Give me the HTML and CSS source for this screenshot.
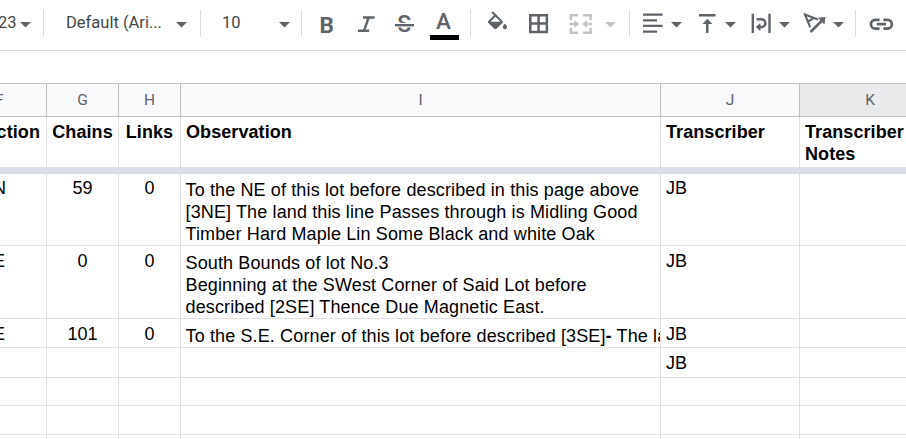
FILE: index.html
```html
<!DOCTYPE html>
<html lang="en">
<head>
<meta charset="utf-8">
<title>Sheet</title>
<link rel="stylesheet" href="styles.css">
</head>
<body>
<svg width="0" height="0" class="defs"><symbol id="caret" viewBox="0 0 11 6"><path d="M0 0h11L5.5 5.6z"/></symbol></svg>
<div class="toolbar">
  <div class="zoom"><span>23</span><svg class="caret"><use href="#caret"/></svg></div>
  <i class="sep"></i>
  <div class="font"><span>Default (Ari...</span><svg class="caret"><use href="#caret"/></svg></div>
  <i class="sep"></i>
  <div class="size"><span>10</span><svg class="caret"><use href="#caret"/></svg></div>
  <i class="sep"></i>
  <div class="group style">
    <svg class="icon" viewBox="0 0 26 50"><text x="5.5" y="32.5" class="bold">B</text></svg>
    <svg class="icon" viewBox="0 0 26 50"><path class="line" d="M10 17.4h11.6M5 30.8h11.2M15.7 17.4l-4.7 13.4"/></svg>
    <svg class="icon" viewBox="0 0 26 50"><text x="13.3" y="32.4" class="strike" text-anchor="middle">S</text><path fill="#fff" d="M4 22.8h19v4.6H4z"/><path d="M4 24h19v2.4H4z"/></svg>
    <svg class="icon wide" viewBox="0 0 30 50"><text x="13.5" y="28.8" class="color" text-anchor="middle">A</text><path fill="#000" d="M0 35h29v5H0z"/></svg>
  </div>
  <i class="sep"></i>
  <div class="group cell">
    <svg class="icon" viewBox="0 0 26 50"><path transform="translate(.8 11.2) scale(1.06)" d="M16.56 8.94L7.62 0 6.21 1.41l2.38 2.38-5.15 5.15c-.59.59-.59 1.54 0 2.12l5.5 5.5c.29.29.68.44 1.06.44s.77-.15 1.06-.44l5.5-5.5c.59-.58.59-1.53 0-2.12zM5.21 10L10 5.21 14.79 10zM19 11.5s-2 2.17-2 3.5c0 1.1.9 2 2 2s2-.9 2-2c0-1.33-2-3.5-2-3.5z"/></svg>
    <svg class="icon" viewBox="0 0 26 50"><path class="line" d="M4.3 15.3h16.6v16.6H4.3zM12.6 15v17M4 23.6h17"/></svg>
    <svg class="icon off" viewBox="0 0 26 50"><path class="line" d="M2.8 20v-4.7h7.4M15 15.3h7.6V20M2.8 28v4.7h7.4M15 32.7h7.6V28M1.5 24h6M24 24h-6"/><path d="M6.5 20l4.5 4-4.5 4zM18.8 20l-4.5 4 4.5 4z"/></svg>
    <svg class="caret off"><use href="#caret"/></svg>
  </div>
  <i class="sep"></i>
  <div class="group align">
    <svg class="icon" viewBox="0 0 26 50"><path d="M3 13.4h19.6v2.3H3zM3 19.2h14v2.3H3zM3 24.8h19.6v2.3H3zM3 30.5h14v2.3H3z"/></svg>
    <svg class="caret"><use href="#caret"/></svg>
    <svg class="icon" viewBox="0 0 26 50"><path d="M5 14h16.5v2.5H5zM12 33v-9H8.5l4.9-5.2 4.9 5.2h-3.8v9z"/></svg>
    <svg class="caret"><use href="#caret"/></svg>
    <svg class="icon" viewBox="0 0 26 50"><path d="M3.6 13.7H6V33H3.6zM20.3 13.7h2.4V33h-2.4z"/><path class="line" d="M8.6 19.3h4.9a3.8 3.8 0 0 1 0 7.8h-2"/><path d="M12.4 23v8.2L7.9 27.1z"/></svg>
    <svg class="caret"><use href="#caret"/></svg>
    <svg class="icon" viewBox="0 0 26 50"><path class="line" d="M8.5 32L21 19.5"/><path d="M16 17.8l7.4-.8-.8 7.4z"/><path class="thin" d="M8.2 27.3L3 14.6l13 5M12.2 17.8L6 21.5"/></svg>
    <svg class="caret"><use href="#caret"/></svg>
  </div>
  <i class="sep"></i>
  <div class="group link">
    <svg class="icon" viewBox="0 0 26 50"><path class="line heavy" d="M11.6 19.8H7.3a4.4 4.4 0 0 0 0 8.8h4.3M15.4 19.8h4.1a4.4 4.4 0 0 1 0 8.8h-4.1M8.8 24.2h9.2"/></svg>
  </div>
</div>
<div class="formula"></div>
<div class="sheet">
  <div class="row letters"><div><span class="f">F</span></div><div>G</div><div>H</div><div>I</div><div>J</div><div class="active"><span class="k">K</span></div></div>
  <div class="row titles"><div class="cut">Direction</div><div class="mid">Chains</div><div class="mid">Links</div><div>Observation</div><div>Transcriber</div><div>Transcriber<br>Notes</div></div>
  <div class="frozen"></div>
  <div class="row r1"><div class="dir">N</div><div class="mid">59</div><div class="mid">0</div><div class="obs">To the NE of this lot before described in this page above<br>[3NE] The land this line Passes through is Midling Good<br>Timber Hard Maple Lin Some Black and white Oak</div><div>JB</div><div></div></div>
  <div class="row r2"><div class="dir">E</div><div class="mid">0</div><div class="mid">0</div><div class="obs">South Bounds of lot No.3<br>Beginning at the SWest Corner of Said Lot before<br>described [2SE] Thence Due Magnetic East.</div><div>JB</div><div></div></div>
  <div class="row r3"><div class="dir">E</div><div class="mid">101</div><div class="mid">0</div><div class="obs">To the S.E. Corner of this lot before described [3SE]<b>-</b> The la</div><div>JB</div><div></div></div>
  <div class="row r4"><div></div><div></div><div></div><div></div><div>JB</div><div></div></div>
  <div class="row r5"><div></div><div></div><div></div><div></div><div></div><div></div></div>
  <div class="row r6"><div></div><div></div><div></div><div></div><div></div><div></div></div>
  <div class="row r7"><div></div><div></div><div></div><div></div><div></div><div></div></div>
</div>
</body>
</html>
```
FILE: styles.css
```css
* { box-sizing: border-box; }
body { margin: 0; width: 906px; height: 439px; overflow: hidden; background: #fff; font-family: "Liberation Sans", Arial, sans-serif; }
.defs { display: block; }
.toolbar { display: flex; height: 51px; border-bottom: 1px solid #dadce0; color: #444746; font: 16.5px/50px Roboto, sans-serif; }
.toolbar svg { flex: none; display: block; fill: #5f6368; }
.toolbar .caret { width: 11px; height: 6px; margin-top: 21.5px; }
.toolbar .off { fill: #c2c3c5; }
.icon { width: 26px; height: 50px; }
.icon.wide { width: 30px; }
.line { fill: none; stroke: #5f6368; stroke-width: 2.5; }
.heavy { stroke-width: 2.7; }
.off .line { stroke: #c2c3c5; }
.thin { fill: none; stroke: #5f6368; stroke-width: 2.1; }
.bold { font: 700 22.5px Roboto, sans-serif; }
.strike { font: 500 23px Roboto, sans-serif; }
.color { font: 500 22.5px Roboto, sans-serif; }
.sep { flex: none; width: 1px; height: 27px; margin-top: 10px; background: #dadce0; }
.zoom, .font, .size, .group { flex: none; display: flex; }
.zoom, .font, .size { line-height: 46px; white-space: nowrap; }
.zoom { width: 43px; }
.zoom span { width: 20px; margin-left: -2px; }
.zoom .caret { margin-left: 2px; }
.font { width: 156px; }
.font span { width: 109px; margin-left: 22px; }
.font .caret { margin-left: 1px; }
.size { width: 100px; }
.size span { width: 57px; margin-left: 21px; line-height: 45px; }
.size .caret { margin-left: 0; }
.style { width: 168px; padding-left: 12px; gap: 12.5px; }
.cell { width: 158px; padding-left: 13px; gap: 16px; }
.cell .caret { margin-left: -5px; }
.align { width: 225px; padding-left: 10px; }
.align .caret { margin-left: 5px; margin-right: 12px; }
.link { padding-left: 12px; }
.formula { height: 32px; }
.sheet { border-top: 1px solid #c0c0c0; }
.row { display: grid; grid-template-columns: 47px 72px 62px 480px 139px 106px; font-size: 18px; line-height: 22px; color: #000; }
.row > div { border-right: 1px solid #e0e0e0; border-bottom: 1px solid #e0e0e0; padding: 4px 0 0 5px; overflow: hidden; white-space: nowrap; min-width: 0; }
.row > div:last-child { border-right: 0; }
.letters { height: 33px; font: 15.5px/32px Roboto, sans-serif; color: #5f6368; text-align: center; }
.letters > div { padding: 0; background: #f8f9fa; border-color: #c0c0c0; }
.row > .active { background: #e8eaeb; }
.f { margin-left: -48px; }
.k { margin-left: 34px; }
.titles { height: 50px; font-weight: 700; letter-spacing: .08px; }
.titles > div { border-bottom: 0; }
.row > .cut { display: flex; justify-content: flex-end; padding-right: 6px; }
.row > .mid { text-align: center; padding-left: 0; }
.row > .dir { padding-left: 0; text-indent: -7px; }
.row > .obs { padding: 6px 0 0 4.5px; letter-spacing: .13px; }
.frozen { height: 7px; background: #dadfe8; }
.r1 { height: 72px; }
.r1 > div { padding-top: 3px; }
.row.r1 > .obs { padding-top: 5px; }
.r2 { height: 73px; }
.r3 { height: 29px; }
.r4 { height: 30px; }
.r5 { height: 28px; }
.r6 { height: 29px; }
.r7 { height: 4px; }
.r7 > div { padding: 0; border-bottom: 0; }
```
